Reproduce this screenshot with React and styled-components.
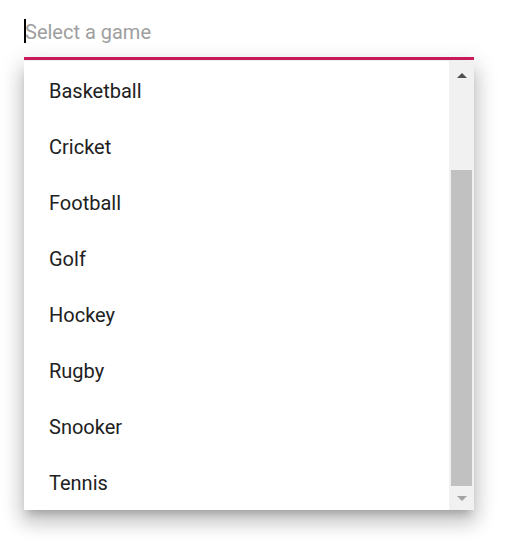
import React from "react";
import styled, { createGlobalStyle } from "styled-components";

const GlobalStyle = createGlobalStyle`
  html, body {
    margin: 0;
    padding: 0;
    background: #ffffff;
  }
  body {
    font-family: Roboto, "Noto Sans", "Liberation Sans", sans-serif;
  }
`;

const Page = styled.div`
  width: 523px;
  height: 553px;
  padding: 17px 24px 0;
  box-sizing: border-box;
`;

const Field = styled.div`
  width: 450px;
  display: flex;
  flex-direction: column;
`;

const InputWrap = styled.div`
  position: relative;
  height: 30px;
  margin-bottom: 10px;
`;

const TextInput = styled.input`
  width: 100%;
  height: 30px;
  border: 0;
  outline: none;
  padding: 0 0 0 1px;
  margin: 0;
  background: transparent;
  font-family: Roboto, "Noto Sans", sans-serif;
  font-size: 20px;
  color: #212121;
  caret-color: transparent;
  &::placeholder {
    color: #9e9e9e;
    opacity: 1;
  }
`;

/* text caret, drawn over the input's left edge */
const Caret = styled.span`
  position: absolute;
  left: 0;
  top: 2px;
  width: 2px;
  height: 24px;
  background: #000;
`;

const Underline = styled.div`
  height: 3px;
  background: #d21d5f;
  margin-bottom: 1px;
`;

const Popup = styled.div`
  height: 449px;
  display: flex;
  background: #fff;
  box-shadow: 0 7px 8px -4px rgba(0, 0, 0, 0.2),
    0 12px 17px 2px rgba(0, 0, 0, 0.14), 0 5px 22px 4px rgba(0, 0, 0, 0.12);
`;

const List = styled.ul`
  flex: 1;
  margin: 0;
  padding: 2px 0 0;
  list-style: none;
  overflow: hidden;
`;

const Item = styled.li`
  height: 56px;
  line-height: 56px;
  padding: 0 25px;
  font-size: 20px;
  color: #212121;
  white-space: nowrap;
`;

const ScrollBar = styled.div`
  width: 25px;
  background: #f1f1f1;
  display: flex;
  flex-direction: column;
  align-items: center;
`;

const ArrowButton = styled.div`
  height: ${(p) => p.$height}px;
  padding-top: ${(p) => p.$top}px;
  width: 100%;
  display: flex;
  align-items: center;
  justify-content: center;
`;

const Arrow = styled.div`
  width: 0;
  height: 0;
  border-left: 5px solid transparent;
  border-right: 5px solid transparent;
  ${(p) =>
    p.$dir === "up"
      ? `border-bottom: 5px solid ${p.$color};`
      : `border-top: 5px solid ${p.$color};`}
`;

const Track = styled.div`
  flex: 1;
  width: 100%;
  display: flex;
  flex-direction: column;
  justify-content: flex-end;
  align-items: center;
`;

const Thumb = styled.div`
  width: 21px;
  background: #c1c1c1;
`;

const games = [
  "Basketball",
  "Cricket",
  "Football",
  "Golf",
  "Hockey",
  "Rugby",
  "Snooker",
  "Tennis",
];

export default function App() {
  const thumbHeight = 316;
  return (
    <>
      <GlobalStyle />
      <Page>
        <Field>
          <InputWrap>
            <TextInput type="text" placeholder="Select a game" readOnly />
            <Caret />
          </InputWrap>
          <Underline />
          <Popup>
            <List>
              {games.map((g) => (
                <Item key={g}>{g}</Item>
              ))}
            </List>
            <ScrollBar>
              <ArrowButton $height={20} $top={4}>
                <Arrow $dir="up" $color="#505050" />
              </ArrowButton>
              <Track>
                <Thumb style={{ height: thumbHeight }} />
              </Track>
              <ArrowButton $height={24} $top={0}>
                <Arrow $dir="down" $color="#a3a3a3" />
              </ArrowButton>
            </ScrollBar>
          </Popup>
        </Field>
      </Page>
    </>
  );
}
